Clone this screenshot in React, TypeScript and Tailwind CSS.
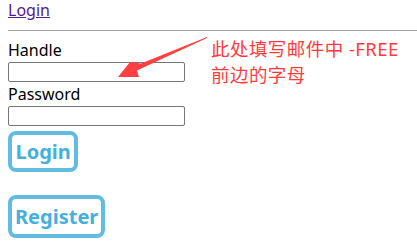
import React from "react";

export default function App() {
  return (
    <div className="relative w-[417px] h-[249px] overflow-hidden bg-white font-['Noto_Sans',sans-serif] text-[16px] text-black">
      <div className="px-2 leading-[20px]">
        <a href="#" className="text-[#551a8b] underline">Login</a>
      </div>
      <div className="ml-2 mt-[10px] h-px bg-[#a0a0a0]" />
      <div className="flex flex-col items-start px-2 pt-[9px]">
        <label className="leading-[20px]">Handle</label>
        <input className="mt-[2px] h-[20px] w-[177px] rounded-[2px] border border-[#767676] bg-white" />
        <label className="mt-[2px] leading-[20px]">Password</label>
        <input type="password" className="mt-[2px] h-[20px] w-[177px] rounded-[2px] border border-[#767676] bg-white" />
        <button className="mt-[5px] flex h-[41px] items-center rounded-[8px] border-4 border-[#62bce0] bg-white px-[3.5px] text-[20px] font-bold leading-[28px] text-[#45b0de]">
          Login
        </button>
        <button className="mt-[23px] flex h-[43px] items-center rounded-[8px] border-4 border-[#62bce0] bg-white px-[3px] text-[20px] font-bold leading-[28px] text-[#45b0de]">
          Register
        </button>
      </div>
      <svg className="absolute left-0 top-0" width="417" height="249" viewBox="0 0 417 249">
        <polygon
          points="207,37 141,63.5 130,62 118,77 139,77 137,70.5 207,38"
          fill="#ff4040"
        />
      </svg>
      <div className="absolute left-[211px] top-[36px] text-[18.5px] leading-[26px] tracking-[0.45px] text-[#ff3b3b] font-['Noto_Sans','Noto_Sans_CJK_SC',sans-serif]">
        <div>此处填写邮件中 -FREE</div>
        <div>前边的字母</div>
      </div>
    </div>
  );
}
